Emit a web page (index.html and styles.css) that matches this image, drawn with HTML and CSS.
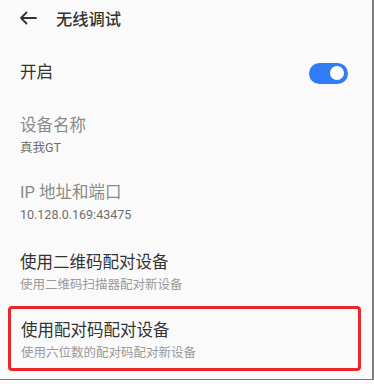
FILE: index.html
```html
<!DOCTYPE html>
<html>
<head>
    <title>无线调试</title>
    <link rel="stylesheet" href="styles.css">
</head>
<body>
    <div class="screen">
        <div class="header">
            <svg class="back" width="18" height="14" viewBox="0 0 18 14">
                <path d="M17 7H2M7.5 1.5L2 7l5.5 5.5" fill="none" stroke="#333" stroke-width="1.8" stroke-linecap="round" stroke-linejoin="round"/>
            </svg>
            <span class="title">无线调试</span>
        </div>

        <div class="switch-row">
            <span class="switch-label">开启</span>
            <div class="toggle"><div class="knob"></div></div>
        </div>

        <div class="item item-name disabled">
            <div class="item-title">设备名称</div>
            <div class="item-sub">真我GT</div>
        </div>

        <div class="item item-ip disabled">
            <div class="item-title">IP 地址和端口</div>
            <div class="item-sub">10.128.0.169:43475</div>
        </div>

        <div class="item item-qr">
            <div class="item-title">使用二维码配对设备</div>
            <div class="item-sub">使用二维码扫描器配对新设备</div>
        </div>

        <div class="item item-code highlight">
            <div class="item-title">使用配对码配对设备</div>
            <div class="item-sub">使用六位数的配对码配对新设备</div>
        </div>
    </div>
</body>
</html>
```

FILE: styles.css
```css
body {
    margin: 0;
    padding: 0;
    background-color: #fafafa;
    font-family: Roboto, "Noto Sans CJK SC", sans-serif;
    color: #333;
}

.screen {
    width: 372px;
    height: 379px;
    border-right: 2px solid #7c7c7c;
    border-bottom: 1px solid #7c7c7c;
    overflow: hidden;
}

.header {
    height: 35px;
    display: flex;
    align-items: center;
    padding-left: 19px;
}

.back {
    margin-right: 19px;
}

.title {
    font-size: 16.3px;
    font-weight: 500;
    color: #333;
}

.switch-row {
    margin-top: 27px;
    height: 22px;
    display: flex;
    align-items: center;
    justify-content: space-between;
    padding: 0 24px 0 20px;
}

.switch-label {
    font-size: 16.5px;
    line-height: 22px;
    color: #333;
}

.toggle {
    width: 39px;
    height: 21px;
    border-radius: 11px;
    background-color: #2f7cf5;
    display: flex;
    align-items: center;
    justify-content: flex-end;
}

.knob {
    width: 14px;
    height: 14px;
    border-radius: 50%;
    background-color: #fff;
    margin-right: 4px;
}

.item {
    padding: 0 20px;
}

.item-title {
    font-size: 16.5px;
    line-height: 20px;
    color: #333;
}

.item-sub {
    font-size: 12.5px;
    line-height: 16px;
    margin-top: 4px;
    color: #999;
}

.disabled .item-title {
    color: #8a8a8a;
}

.disabled .item-sub {
    color: #6e6e6e;
}

.item-name {
    margin-top: 32px;
}

.item-ip {
    margin-top: 27px;
}

.item-qr {
    margin-top: 30px;
}

.highlight {
    margin: 13px 11px 0 8px;
    height: 59px;
    padding: 12px 10px 0 10px;
    border: 3px solid #e8262b;
    border-radius: 4px;
    box-sizing: border-box;
    height: 65px;
}
```
